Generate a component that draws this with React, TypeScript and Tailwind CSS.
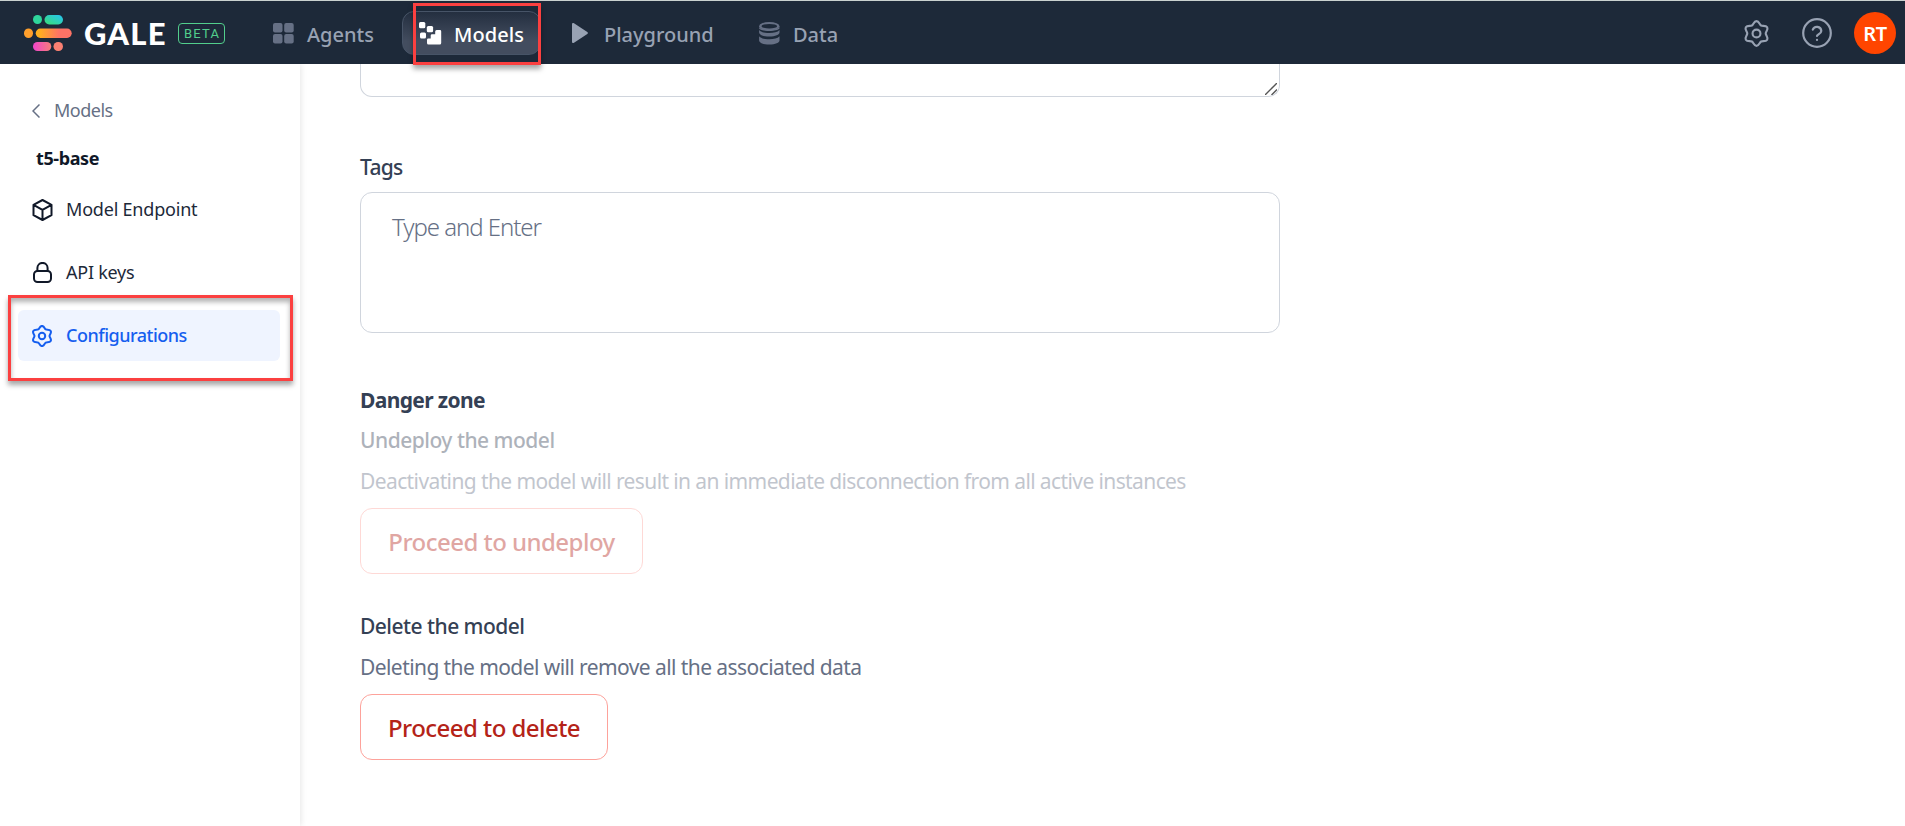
import React from 'react';

type IconProps = { className?: string };

const Gear = ({ className }: IconProps) => (
  <svg viewBox="0 0 24 24" fill="none" stroke="currentColor" strokeLinejoin="round" className={className}>
    <path d="M12 1C14.400 1 14.700 4.100 16.100 4.900S20.300 4.400 21.500 6.500S20.200 10.400 20.200 12S22.700 15.400 21.500 17.500S17.500 18.300 16.100 19.100S14.400 23 12 23S9.300 19.900 7.900 19.100S3.700 19.600 2.500 17.500S3.800 13.600 3.800 12S1.300 8.600 2.500 6.500S6.500 5.700 7.900 4.900S9.600 1 12 1Z" />
    <circle cx="12" cy="12" r="3.500" />
  </svg>
);

const Logo = () => (
  <svg className="h-9 w-12" viewBox="0 0 48 36" fill="none">
    <defs>
      <linearGradient id="teal" x1="0" y1="1" x2="1" y2="0">
        <stop offset="0.2" stopColor="#37d98c" />
        <stop offset="1" stopColor="#25c3f5" />
      </linearGradient>
      <linearGradient id="orange" x1="0" y1="0" x2="1" y2="0">
        <stop offset="0.1" stopColor="#ffae1f" />
        <stop offset="0.65" stopColor="#fd7366" />
      </linearGradient>
      <linearGradient id="pink" x1="0" y1="0" x2="1" y2="0">
        <stop offset="0" stopColor="#f145cc" />
        <stop offset="1" stopColor="#f67d78" />
      </linearGradient>
    </defs>
    <rect x="9" y="0" width="9" height="9" rx="4.500" fill="#2fd59b" />
    <rect x="20.500" y="0" width="18.500" height="9.500" rx="4.700" fill="url(#teal)" />
    <rect x="0" y="13.500" width="9" height="9.500" rx="4.500" fill="#ff9f2c" />
    <rect x="11.700" y="13.500" width="36" height="9.500" rx="4.700" fill="url(#orange)" />
    <rect x="9" y="27" width="18.300" height="9" rx="4.500" fill="url(#pink)" />
    <rect x="29.500" y="27" width="9.500" height="9" rx="4.500" fill="#fa8072" />
  </svg>
);

const AgentsIcon = () => (
  <svg className="mt-px h-[21px] w-[21px] fill-[#667085]" viewBox="0 0 21 21">
    <rect width="9.500" height="9.500" rx="2" />
    <rect x="11.200" width="9.500" height="9.500" rx="2" />
    <rect y="11" width="9.500" height="9.500" rx="2" />
    <rect x="11.200" y="11" width="9.500" height="9.500" rx="2" />
  </svg>
);

const ModelsIcon = () => (
  <svg className="mt-px h-[23px] w-[23px] fill-white" viewBox="0 0 23 23">
    <rect x="0" y="0" width="6.300" height="6.300" rx="1.500" />
    <rect x="7.800" y="4" width="6.300" height="6.300" rx="1.500" />
    <rect x="1" y="10.500" width="6" height="6" rx="1.500" />
    <path d="M17.800 8h3.200a1.200 1.200 0 0 1 1.200 1.200v11.800a1.500 1.500 0 0 1-1.500 1.500H9.500A1.500 1.500 0 0 1 8 21v-3.200a1.300 1.300 0 0 1 1.300-1.300h2.400v-3a1.300 1.300 0 0 1 1.300-1.300h3.200V9.500A1.500 1.500 0 0 1 17.800 8Z" />
  </svg>
);

const PlayIcon = () => (
  <svg className="h-5 w-4 fill-[#98a2b3]" viewBox="0 0 16 20">
    <path d="M0 1.300C0 .2 1 -.3 2 .3L15.300 9.100c.8.500.8 1.300 0 1.800L2 19.700c-1 .6-2 .1-2-1Z" />
  </svg>
);

const DataIcon = () => (
  <svg className="mt-px h-[23px] w-[21px]" viewBox="0 0 21 23">
    <g fill="#667085">
      <ellipse cx="10.300" cy="4.200" rx="10.200" ry="4.200" />
      <path d="M.1 8c2 2.300 5.500 3 10.200 3s8.200-.7 10.200-3v2.500c0 2.300-4 4-10.200 4S.1 12.800.1 10.500Z" />
      <path d="M.1 14.300c2 2.300 5.500 3 10.200 3s8.200-.7 10.200-3v4.200c0 2.300-4 4-10.200 4S.1 20.800.1 18.500Z" />
      <path d="M.1 5c2 3.400 18.400 3.400 20.400 0v1.500c-2 3.300-18.400 3.300-20.400 0Z" />
    </g>
    <ellipse cx="10.300" cy="4.200" rx="7.800" ry="2.300" fill="#1d2939" />
  </svg>
);

const Cube = () => (
  <svg className="h-[22px] w-[21px]" viewBox="0 0 21 22" fill="none" stroke="#101828" strokeWidth="2" strokeLinejoin="round">
    <path d="M10.500 1 19.500 5.800v10.400L10.500 21 1.500 16.200V5.800ZM1.500 5.800l9 5 9-5M10.500 10.800V21" />
  </svg>
);

const Lock = () => (
  <svg className="h-[21px] w-[21px]" viewBox="0 0 21 21" fill="none" stroke="#101828" strokeWidth="2">
    <rect x="2" y="9" width="17" height="11" rx="3.500" />
    <path d="M5.400 9V6a5.100 5.100 0 0 1 10.200 0v3" />
  </svg>
);

function Header() {
  return (
    <header className="relative z-10 flex h-16 shrink-0 items-center border-t border-[#c9d1cf] bg-[#1d2939] font-medium text-xl text-[#98a2b3]">
      <div className="flex w-[272px] shrink-0 items-center pl-6">
        <Logo />
        <span className="ml-[12px] w-[94px] pt-px font-['Lato'] text-[31px] leading-none font-black tracking-[1.200px] text-white">GALE</span>
        <span className="mt-[2px] flex h-[21px] w-[47px] items-center justify-center rounded-[4px] border border-[#52ce8c] pt-px pl-px font-['Roboto'] text-[13px] font-normal tracking-[1.200px] text-[#52ce8c]">
          BETA
        </span>
      </div>
      <nav className="flex items-center">
        <a className="flex w-[130px] items-center pl-px"><AgentsIcon /><span className="ml-[13px] pt-[5px]">Agents</span></a>
        <a className="flex h-11 w-[139px] items-center rounded-xl border border-[#475467] bg-linear-to-b from-[#242f40] to-[#434d5f] to-70% pl-4 text-white">
          <ModelsIcon /><span className="ml-[12px] pt-[5px] tracking-[0.100px]">Models</span>
        </a>
        <a className="flex w-[187px] items-center pl-[31px]"><PlayIcon /><span className="ml-4 pt-[5px]">Playground</span></a>
        <a className="flex items-center pl-[31px]"><DataIcon /><span className="ml-[13px] pt-[5px]">Data</span></a>
      </nav>
      <div className="ml-auto flex items-center pr-[9px]">
        <Gear className="mt-px h-[27px] w-[27px] stroke-[1.900]" />
        <svg className="ml-[32px] h-[30px] w-[30px]" viewBox="0 0 30 30" fill="none" stroke="currentColor" strokeWidth="2.200" strokeLinecap="round">
          <circle cx="15" cy="15" r="13.800" />
          <path d="M10.800 11.700a4.400 4.400 0 0 1 8.500 1.200c0 2.800-4.300 3.700-4.300 5M15 21.800v.1" />
        </svg>
        <span className="ml-[22px] flex h-[42px] w-[42px] items-center justify-center rounded-full bg-[#ff4500] pt-[3px] font-semibold tracking-[-0.300px] text-white">RT</span>
      </div>
      <div className="absolute top-[2px] left-[413px] h-[62px] w-[128px] border-[3px] border-[#fb4040] shadow-[0_4px_5px_rgba(0,0,0,0.35)]" />
    </header>
  );
}

function Sidebar() {
  return (
    <aside className="relative w-[300px] shrink-0 bg-white px-[18px] pt-[30px] text-lg text-[#1d2939] shadow-[1px_0_6px_rgba(0,0,0,0.1)]">
      <a className="flex h-8 items-center pl-[14px] text-[#667085]">
        <svg className="mt-px h-[14px] w-2" viewBox="0 0 8 14" fill="none" stroke="currentColor" strokeWidth="1.500"><path d="M7.500.5 1 7l6.500 6.500" /></svg>
        <span className="ml-[14px] tracking-[-0.500px]">Models</span>
      </a>
      <div className="mt-4 flex h-8 items-center pl-[18px] font-bold tracking-[-0.400px] text-[#101828]">t5-base</div>
      <a className="mt-[10px] flex h-[51px] items-center pl-[14px]"><Cube /><span className="ml-[13px] pb-[2px] tracking-[-0.200px]">Model Endpoint</span></a>
      <a className="mt-3 flex h-[51px] items-center pl-[14px]"><Lock /><span className="ml-[13px] pb-px tracking-[-0.250px]">API keys</span></a>
      <a className="mt-3 flex h-[51px] w-[262px] items-center rounded-md bg-[#eff4ff] pl-[13px] font-medium text-[#155eef]">
        <Gear className="h-[22px] w-[22px] stroke-[2.200]" /><span className="ml-[13px] pb-px tracking-[-0.500px]">Configurations</span>
      </a>
      <div className="absolute top-[231px] left-2 h-[86px] w-[285px] border-[3px] border-[#fb4040] shadow-[0_4px_5px_rgba(0,0,0,0.35),inset_0_4px_5px_rgba(0,0,0,0.3)]" />
    </aside>
  );
}

function Settings() {
  return (
    <main className="flex w-[980px] flex-col items-start pl-[60px] text-[21px] leading-8 whitespace-nowrap text-[#344054]">
      <div className="flex h-[33px] w-[920px] items-end justify-end rounded-b-xl border border-t-0 border-[#d0d5dd] pr-[2px] pb-px">
        <svg className="h-3 w-3" viewBox="0 0 12 12" stroke="#555" strokeWidth="1.400"><path d="M0 12 12 0M6.500 12 12 6.500" /></svg>
      </div>
      <div className="mt-[54px] font-medium tracking-[-0.700px]">Tags</div>
      <div className="mt-[9px] h-[141px] w-[920px] rounded-xl border border-[#d0d5dd] pt-[18px] pl-[31px] text-2xl leading-8 font-light tracking-[-1.050px] text-[#667085]">Type and Enter</div>
      <h2 className="mt-[51px] font-bold tracking-[-0.650px]">Danger zone</h2>
      <section className="mt-2 opacity-40">
        <h3 className="font-medium tracking-[-0.500px]">Undeploy the model</h3>
        <p className="mt-[9px] tracking-[-0.605px] text-[#667085]">Deactivating the model will result in an immediate disconnection from all active instances</p>
        <button className="mt-[11px] block h-[66px] w-[283px] rounded-xl border border-[#fda29b] pt-[2px] text-2xl font-medium tracking-[-0.530px] text-[#b42318]">Proceed to undeploy</button>
      </section>
      <section className="mt-[36px]">
        <h3 className="font-medium tracking-[-0.530px]">Delete the model</h3>
        <p className="mt-[9px] tracking-[-0.575px] text-[#667085]">Deleting the model will remove all the associated data</p>
        <button className="mt-[11px] block h-[66px] w-[248px] rounded-xl border border-[#fda29b] pt-[2px] text-2xl font-medium tracking-[-0.550px] text-[#b42318]">Proceed to delete</button>
      </section>
    </main>
  );
}

export default function App() {
  return (
    <div className="flex h-[826px] w-[1905px] flex-col overflow-hidden bg-white font-['Noto_Sans',sans-serif]">
      <Header />
      <div className="flex min-h-0 flex-1">
        <Sidebar />
        <Settings />
      </div>
    </div>
  );
}
